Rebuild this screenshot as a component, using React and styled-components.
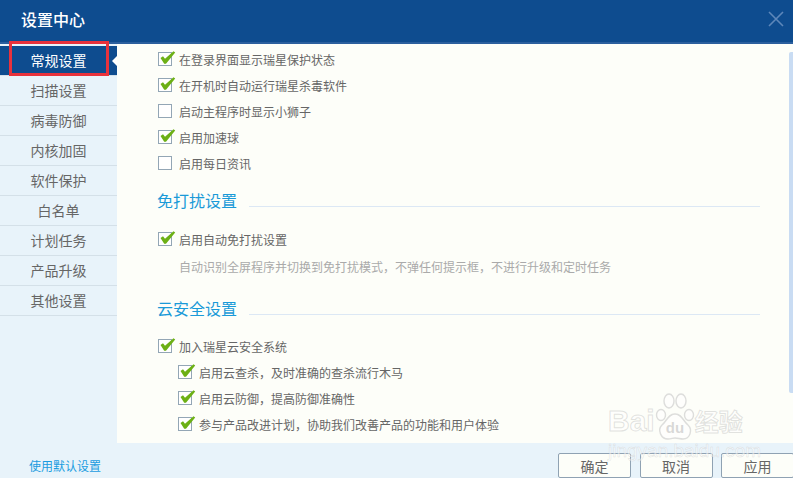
import React from 'react'
import styled, { createGlobalStyle } from 'styled-components'

const GlobalStyle = createGlobalStyle`
  html, body {
    margin: 0;
    padding: 0;
    background: #e8f3fa;
  }
`

const Dialog = styled.div`
  position: relative;
  width: 793px;
  height: 478px;
  overflow: hidden;
  background: #e8f3fa;
  font-family: "Noto Sans CJK SC", "Liberation Sans", sans-serif;
  color: #666;
  display: flex;
  flex-direction: column;
`

const TitleBar = styled.div`
  flex: none;
  box-sizing: border-box;
  height: 44px;
  background: #0e4c8f;
  border-bottom: 2px solid #2b5f9e;
  display: flex;
  align-items: center;
  justify-content: space-between;
  padding: 0 9px 4px 21px;
  color: #fff;
  font-size: 16px;
  font-weight: 500;
`

const Body = styled.div`
  flex: none;
  height: 399px;
  display: flex;
`

const Sidebar = styled.ul`
  flex: none;
  width: 117px;
  margin: 0;
  padding: 2px 0 0;
  list-style: none;
`

const NavItem = styled.li`
  position: relative;
  height: 29px;
  line-height: 29px;
  border-bottom: 1px solid #d4e0e8;
  text-align: center;
  font-size: 14px;
  color: ${props => (props.$active ? '#fff' : '#666')};
  background: ${props => (props.$active ? '#0e4c8f' : 'transparent')};
`

const Notch = styled.span`
  position: absolute;
  right: 0;
  top: 10px;
  width: 0;
  height: 0;
  border-top: 5px solid transparent;
  border-bottom: 5px solid transparent;
  border-right: 5px solid #fff;
`

const Highlight = styled.span`
  position: absolute;
  left: 9px;
  top: -5px;
  width: 94px;
  height: 29px;
  border: 3px solid #e8323c;
  pointer-events: none;
`

const Content = styled.div`
  position: relative;
  flex: 1;
  background: #fdfef9;
  padding: 0 33px 0 41px;
`

const ScrollThumb = styled.span`
  position: absolute;
  right: 0;
  top: 8px;
  width: 4px;
  height: 341px;
  background: #c9dcf3;
  border-radius: 2px 0 0 2px;
`

const Rows = styled.div`
  display: flex;
  flex-direction: column;
  gap: 6px;
  padding-top: 5px;
`

const Row = styled.label`
  display: flex;
  align-items: center;
  gap: 7px;
  height: 20px;
  font-size: 12px;
  margin-left: ${props => (props.$nested ? '20px' : '0')};
`

const Box = styled.span`
  position: relative;
  flex: none;
  width: 12px;
  height: 12px;
  border: 1px solid #93a6b5;
  background: #fff;
  svg {
    position: absolute;
    left: 1px;
    top: -2px;
  }
`

const Section = styled.div`
  display: flex;
  align-items: center;
  gap: 12px;
  margin-top: ${props => props.$top}px;
  margin-bottom: ${props => props.$bottom}px;
  margin-left: -1px;
  height: 22px;
  font-size: 16px;
  color: #1a9ad8;
  &::after {
    content: '';
    flex: 1;
    align-self: flex-end;
    height: 1px;
    margin-bottom: 4px;
    background: #dce8f5;
  }
`

const Hint = styled.div`
  margin: 9px 0 0 21px;
  font-size: 12px;
  line-height: 18px;
  color: #aaa;
`

const Footer = styled.div`
  flex: none;
  height: 35px;
  display: flex;
  align-items: flex-end;
  justify-content: space-between;
  padding-left: 29px;
`

const DefaultLink = styled.a`
  font-size: 12px;
  color: #1a9ce0;
  margin-bottom: 4px;
`

const Buttons = styled.div`
  display: flex;
  gap: 8.5px;
  margin-right: -1px;
`

const Button = styled.button`
  width: 73px;
  height: 25px;
  padding: 0;
  background: #fdfef9;
  border: 1px solid #8fa2b3;
  border-radius: 2px;
  font-family: inherit;
  font-size: 14px;
  color: #666;
`

const Watermark = styled.div`
  position: absolute;
  left: 608px;
  top: 393px;
  width: 145px;
  color: rgba(255, 255, 255, 0.5);
  -webkit-text-stroke: 1px rgba(190, 190, 190, 0.45);
  pointer-events: none;
  font-family: "Liberation Sans", sans-serif;
`

const WatermarkLogo = styled.div`
  display: flex;
  align-items: flex-end;
  height: 48px;
  font-size: 30px;
  font-weight: 700;
  line-height: 40px;
`

const WatermarkCjk = styled.span`
  font-family: "Noto Sans CJK SC", sans-serif;
  font-size: 24px;
  line-height: 40px;
`

const WatermarkUrl = styled.div`
  margin-top: 1px;
  font-size: 19px;
  line-height: 18px;
  white-space: nowrap;
  -webkit-text-stroke: 0.5px rgba(190, 190, 190, 0.45);
`

const Check = () => (
  <svg width="16" height="14" viewBox="0 0 16 14">
    <path d="M0.5 7 L3 5.2 L5 7.8 L13.5 0.3 L15.2 1.6 L6 12.8 L4.2 12.8 Z" fill="#6cb015" />
  </svg>
)

const CloseIcon = () => (
  <svg width="16" height="16" viewBox="0 0 16 16">
    <path d="M1 1 L15 15 M15 1 L1 15" stroke="#5d87ba" strokeWidth="1.6" />
  </svg>
)

const PawIcon = () => (
  <svg width="40" height="48" viewBox="0 0 40 48" style={{ flex: 'none' }}>
    <g fill="rgba(255,255,255,0.45)" stroke="rgba(190,190,190,0.5)" strokeWidth="1.4">
      <ellipse cx="6" cy="22" rx="4.5" ry="5.5" />
      <ellipse cx="14" cy="8" rx="5" ry="7" />
      <ellipse cx="26" cy="8" rx="5" ry="7" />
      <ellipse cx="34" cy="22" rx="4.5" ry="5.5" />
      <path d="M20 21 C13 21 12 28 7 32 C2 37 6 46 13 46 C16 46 18 45 20 45 C23 45 25 46 28 46 C35 46 38 37 33 32 C28 28 27 21 20 21 Z" />
    </g>
    <text x="20" y="40" textAnchor="middle" fontSize="15" fontWeight="700" fill="rgba(190,190,190,0.6)" stroke="none">du</text>
  </svg>
)

const navItems = ['常规设置', '扫描设置', '病毒防御', '内核加固', '软件保护', '白名单', '计划任务', '产品升级', '其他设置']

const CheckRow = ({ checked, nested, children }) => (
  <Row $nested={nested}>
    <Box>{checked && <Check />}</Box>
    {children}
  </Row>
)

const App = () => (
  <Dialog>
    <GlobalStyle />
    <TitleBar>
      设置中心
      <CloseIcon />
    </TitleBar>
    <Body>
      <Sidebar>
        {navItems.map((item, i) => (
          <NavItem key={item} $active={i === 0}>
            {item}
            {i === 0 && <Notch />}
            {i === 0 && <Highlight />}
          </NavItem>
        ))}
      </Sidebar>
      <Content>
        <Rows>
          <CheckRow checked>在登录界面显示瑞星保护状态</CheckRow>
          <CheckRow checked>在开机时自动运行瑞星杀毒软件</CheckRow>
          <CheckRow>启动主程序时显示小狮子</CheckRow>
          <CheckRow checked>启用加速球</CheckRow>
          <CheckRow>启用每日资讯</CheckRow>
        </Rows>
        <Section $top={16} $bottom={18}>免打扰设置</Section>
        <CheckRow checked>启用自动免打扰设置</CheckRow>
        <Hint>自动识别全屏程序并切换到免打扰模式，不弹任何提示框，不进行升级和定时任务</Hint>
        <Section $top={21} $bottom={12}>云安全设置</Section>
        <Rows>
          <CheckRow checked>加入瑞星云安全系统</CheckRow>
          <CheckRow checked nested>启用云查杀，及时准确的查杀流行木马</CheckRow>
          <CheckRow checked nested>启用云防御，提高防御准确性</CheckRow>
          <CheckRow checked nested>参与产品改进计划，协助我们改善产品的功能和用户体验</CheckRow>
        </Rows>
        <ScrollThumb />
      </Content>
    </Body>
    <Footer>
      <DefaultLink>使用默认设置</DefaultLink>
      <Buttons>
        <Button>确定</Button>
        <Button>取消</Button>
        <Button>应用</Button>
      </Buttons>
    </Footer>
    <Watermark>
      <WatermarkLogo>
        Bai
        <PawIcon />
        <WatermarkCjk>经验</WatermarkCjk>
      </WatermarkLogo>
      <WatermarkUrl>jingyan.baidu.com</WatermarkUrl>
    </Watermark>
  </Dialog>
)

export default App
